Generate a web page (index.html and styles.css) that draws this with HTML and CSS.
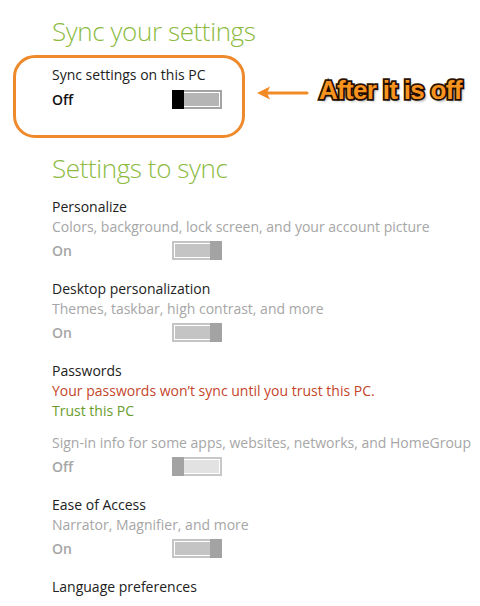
FILE: index.html
```html
<!DOCTYPE html>
<html lang="en">

<head>
    <meta charset="UTF-8">
    <meta name="viewport" content="width=device-width, initial-scale=1.0">
    <title>Sync your settings</title>
    <link rel="stylesheet" href="styles.css">
</head>

<body>
    <div class="page">
        <h2 class="section-title">Sync your settings</h2>

        <!-- Annotated master switch -->
        <div class="callout-row">
            <div class="callout-box">
                <div class="setting-name">Sync settings on this PC</div>
                <div class="toggle-row">
                    <span class="state strong">Off</span>
                    <span class="toggle off dark"><span class="thumb"></span></span>
                </div>
            </div>
            <svg class="arrow" width="54" height="16" viewBox="0 0 54 16">
                <path d="M52 8 L12 8" stroke="#f28a25" stroke-width="3" stroke-linecap="round" />
                <path d="M2 8 L15 1.5 L12 8 L15 14.5 Z" fill="#f28a25" />
            </svg>
            <span class="note">After it is off</span>
        </div>

        <h2 class="section-title second">Settings to sync</h2>

        <div class="setting">
            <div class="setting-name">Personalize</div>
            <div class="setting-desc">Colors, background, lock screen, and your account picture</div>
            <div class="toggle-row">
                <span class="state">On</span>
                <span class="toggle on"><span class="thumb"></span></span>
            </div>
        </div>

        <div class="setting">
            <div class="setting-name">Desktop personalization</div>
            <div class="setting-desc">Themes, taskbar, high contrast, and more</div>
            <div class="toggle-row">
                <span class="state">On</span>
                <span class="toggle on"><span class="thumb"></span></span>
            </div>
        </div>

        <div class="setting">
            <div class="setting-name">Passwords</div>
            <div class="warning">Your passwords won’t sync until you trust this PC.</div>
            <div class="trust-link">Trust this PC</div>
            <div class="setting-desc spaced">Sign-in info for some apps, websites, networks, and HomeGroup</div>
            <div class="toggle-row">
                <span class="state">Off</span>
                <span class="toggle off"><span class="thumb"></span></span>
            </div>
        </div>

        <div class="setting">
            <div class="setting-name">Ease of Access</div>
            <div class="setting-desc">Narrator, Magnifier, and more</div>
            <div class="toggle-row">
                <span class="state">On</span>
                <span class="toggle on"><span class="thumb"></span></span>
            </div>
        </div>

        <div class="setting">
            <div class="setting-name">Language preferences</div>
        </div>
    </div>
</body>

</html>
```

FILE: styles.css
```css
body {
    margin: 0;
    background-color: white;
    font-family: "Open Sans", "Noto Sans", sans-serif;
    font-size: 14px;
    color: #222;
    overflow: hidden;
}

.page {
    width: 480px;
    height: 606px;
    padding-top: 13px;
    box-sizing: border-box;
}

.section-title {
    margin: 0 0 0 52px;
    font-size: 26px;
    font-weight: 300;
    line-height: 36px;
    color: #8cbb3f;
    letter-spacing: -0.4px;
}

.section-title.second {
    margin-top: 12px;
    margin-bottom: 11px;
}

/* Callout around the master switch */
.callout-row {
    display: flex;
    align-items: center;
    margin: 6px 0 0 13px;
}

.callout-box {
    width: 232px;
    height: 83px;
    box-sizing: border-box;
    border: 3px solid #ef8a2c;
    border-radius: 22px;
    padding: 7px 0 0 36px;
}

.callout-box .toggle-row {
    margin-top: 4px;
}

.arrow {
    margin: -8px 0 0 10px;
}

.note {
    margin: -12px 0 0 10px;
    font-family: "Liberation Sans", Arial, sans-serif;
    font-weight: bold;
    font-size: 26px;
    letter-spacing: -0.7px;
    color: #f7931e;
    -webkit-text-stroke: 3.5px #2b1200;
    paint-order: stroke fill;
    text-shadow: 2px 2px 3px rgba(0, 0, 0, 0.45);
}

/* Setting items */
.setting {
    margin-left: 52px;
    margin-bottom: 18px;
}

.setting-name {
    line-height: 20px;
    color: #222;
}

.setting-desc {
    line-height: 20px;
    color: #a6a6a6;
}

.setting-desc.spaced {
    margin-top: 12px;
}

.warning {
    line-height: 20px;
    color: #c4462a;
}

.trust-link {
    line-height: 20px;
    color: #6a9c2c;
}

.toggle-row {
    display: flex;
    align-items: center;
    height: 21px;
    margin-top: 3px;
}

.state {
    width: 120px;
    font-weight: 600;
    color: #a6a6a6;
}

.state.strong {
    color: #111;
}

/* Toggle switches */
.toggle {
    display: flex;
    width: 50px;
    height: 19px;
    box-sizing: border-box;
    border: 2px solid #c4c4c4;
    background-color: #c4c4c4;
    box-shadow: inset 0 0 0 1px #fff;
}

.toggle .thumb {
    width: 12px;
    height: 19px;
    margin: -2px;
    background-color: #a3a3a3;
}

.toggle.on {
    justify-content: flex-end;
}

.toggle.off {
    background-color: #e2e2e2;
    border-color: #c8c8c8;
}

.toggle.dark {
    background-color: #b5b5b5;
    border-color: #a3a3a3;
}

.toggle.dark .thumb {
    background-color: #000;
}
```
